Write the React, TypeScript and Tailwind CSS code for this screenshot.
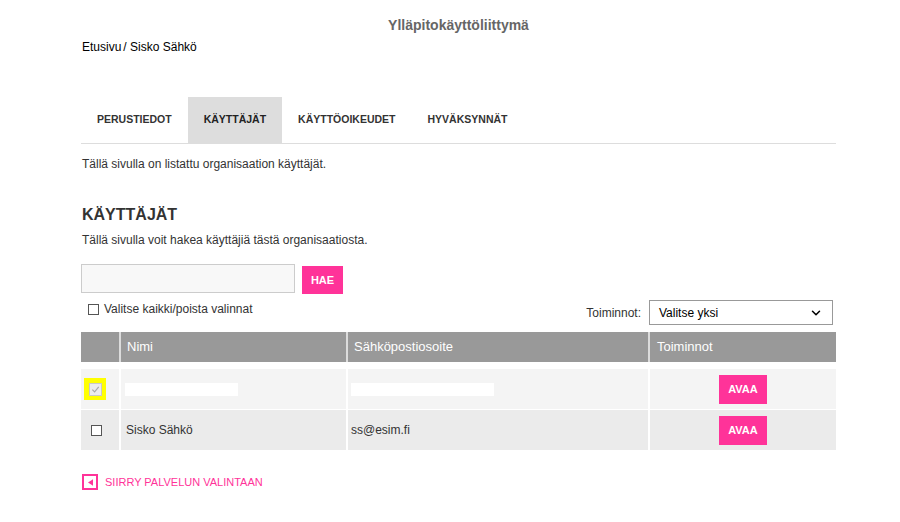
import React from 'react';
import { ChevronDown } from 'lucide-react';

const tabs = ['Perustiedot', 'Käyttäjät', 'Käyttöoikeudet', 'Hyväksynnät'];

function Box({ checked = false }: { checked?: boolean }) {
  if (checked) {
    return (
      <span className="flex h-[13px] w-[13px] items-center justify-center border border-[#c8c8c8] bg-[#ececec]">
        <svg viewBox="0 0 10 10" className="h-[9px] w-[9px]">
          <polyline points="1.5,5.2 4,7.6 8.6,2.2" fill="none" stroke="#a8a8a8" strokeWidth="1.3" />
        </svg>
      </span>
    );
  }
  return <span className="block h-[11px] w-[11px] border border-[#555] bg-white" />;
}

export default function App() {
  return (
    <div className="h-[522px] w-[900px] bg-white font-['Liberation_Sans',Arial,sans-serif] text-[#333]">
      <div className="ml-[81px] w-[755px]">
        {/* Header */}
        <h1 className="pt-[17px] text-center text-[14px] font-bold leading-[16px] text-[#666]">
          Ylläpitokäyttöliittymä
        </h1>
        <div className="mt-[7px] pl-px text-[12px] leading-[14px] text-black">
          Etusivu<span className="ml-[2px]">/</span> Sisko Sähkö
        </div>

        {/* Tabs */}
        <nav className="mt-[43px] flex h-[47px] border-b border-[#dddddd]">
          {tabs.map((t, i) => (
            <div
              key={t}
              className={`flex h-[46px] items-center px-4 text-[10.5px] font-bold uppercase ${
                i === 1 ? 'bg-[#dddddd] text-[#222]' : 'text-[#333]'
              }`}
            >
              {t}
            </div>
          ))}
        </nav>

        <p className="mt-[13px] pl-px text-[12px] leading-[14px]">
          Tällä sivulla on listattu organisaation käyttäjät.
        </p>

        {/* Users section */}
        <h2 className="mt-[34px] pl-px text-[16px] font-bold leading-[20px] text-[#333]">KÄYTTÄJÄT</h2>
        <p className="mt-[8px] pl-px text-[12px] leading-[14px]">
          Tällä sivulla voit hakea käyttäjiä tästä organisaatiosta.
        </p>

        <div className="mt-[17px] flex items-start">
          <input className="h-[29px] w-[214px] border border-[#cccccc] bg-[#f8f8f8] outline-none" />
          <button className="ml-[7px] mt-[2px] h-[28px] w-[41px] bg-[#ff3399] text-[11px] font-bold text-white">
            HAE
          </button>
        </div>

        <div className="mt-[6px] flex items-start justify-between">
          <label className="ml-[7px] mt-[2px] flex items-center gap-[5px] text-[12px] leading-[14px]">
            <Box />
            Valitse kaikki/poista valinnat
          </label>
          <div className="mr-[3px] flex items-center">
            <span className="mr-[8px] text-[12px]">Toiminnot:</span>
            <div className="flex h-[25px] w-[184px] items-center justify-between border border-[#999] bg-white pl-[9px] pr-[9px] text-[12px] text-black">
              <span>Valitse yksi</span>
              <ChevronDown size={14} strokeWidth={2.6} className="text-black" />
            </div>
          </div>
        </div>

        {/* Table */}
        <div className="mt-[7px] flex h-[30px] bg-[#999999] text-[13px] text-white">
          <div className="w-[38px]" />
          <div className="flex w-[227px] items-center border-l-2 border-[#dcdcdc] pl-[6px]">Nimi</div>
          <div className="flex w-[302px] items-center border-l-2 border-[#dcdcdc] pl-[6px]">Sähköpostiosoite</div>
          <div className="flex flex-1 items-center border-l-2 border-[#dcdcdc] pl-[7px]">Toiminnot</div>
        </div>

        <div className="mt-[7px] flex h-[41px] border-b border-white bg-[#f4f4f4] text-[12px]">
          <div className="flex w-[38px] items-center pl-[3px]">
            <span className="flex h-[22px] w-[22px] items-center justify-center bg-[#ffff00]">
              <Box checked />
            </span>
          </div>
          <div className="flex w-[227px] items-center border-l-2 border-white pl-[4px]">
            <span className="block h-[13px] w-[113px] bg-white" />
          </div>
          <div className="flex w-[302px] items-center border-l-2 border-white pl-[3px]">
            <span className="block h-[13px] w-[143px] bg-white" />
          </div>
          <div className="flex flex-1 items-center justify-center border-l-2 border-white">
            <button className="h-[29px] w-[48px] bg-[#ff3399] text-[11px] font-bold text-white">AVAA</button>
          </div>
        </div>

        <div className="flex h-[40px] bg-[#ebebeb] text-[12px]">
          <div className="flex w-[38px] items-center pl-[10px]">
            <Box />
          </div>
          <div className="flex w-[227px] items-center border-l-2 border-white pl-[5px]">Sisko Sähkö</div>
          <div className="flex w-[302px] items-center border-l-2 border-white pl-[3px]">ss@esim.fi</div>
          <div className="flex flex-1 items-center justify-center border-l-2 border-white">
            <button className="h-[29px] w-[48px] bg-[#ff3399] text-[11px] font-bold text-white">AVAA</button>
          </div>
        </div>

        {/* Back link */}
        <a className="mt-[24px] ml-px flex items-center gap-[7px] text-[11px] text-[#ff3399]">
          <span className="flex h-[16px] w-[16px] items-center justify-center border-2 border-[#ff3399]">
            <svg viewBox="0 0 6 8" className="h-[7px] w-[5px]">
              <polygon points="6,0 0,4 6,8" fill="#ff3399" />
            </svg>
          </span>
          SIIRRY PALVELUN VALINTAAN
        </a>
      </div>
    </div>
  );
}
